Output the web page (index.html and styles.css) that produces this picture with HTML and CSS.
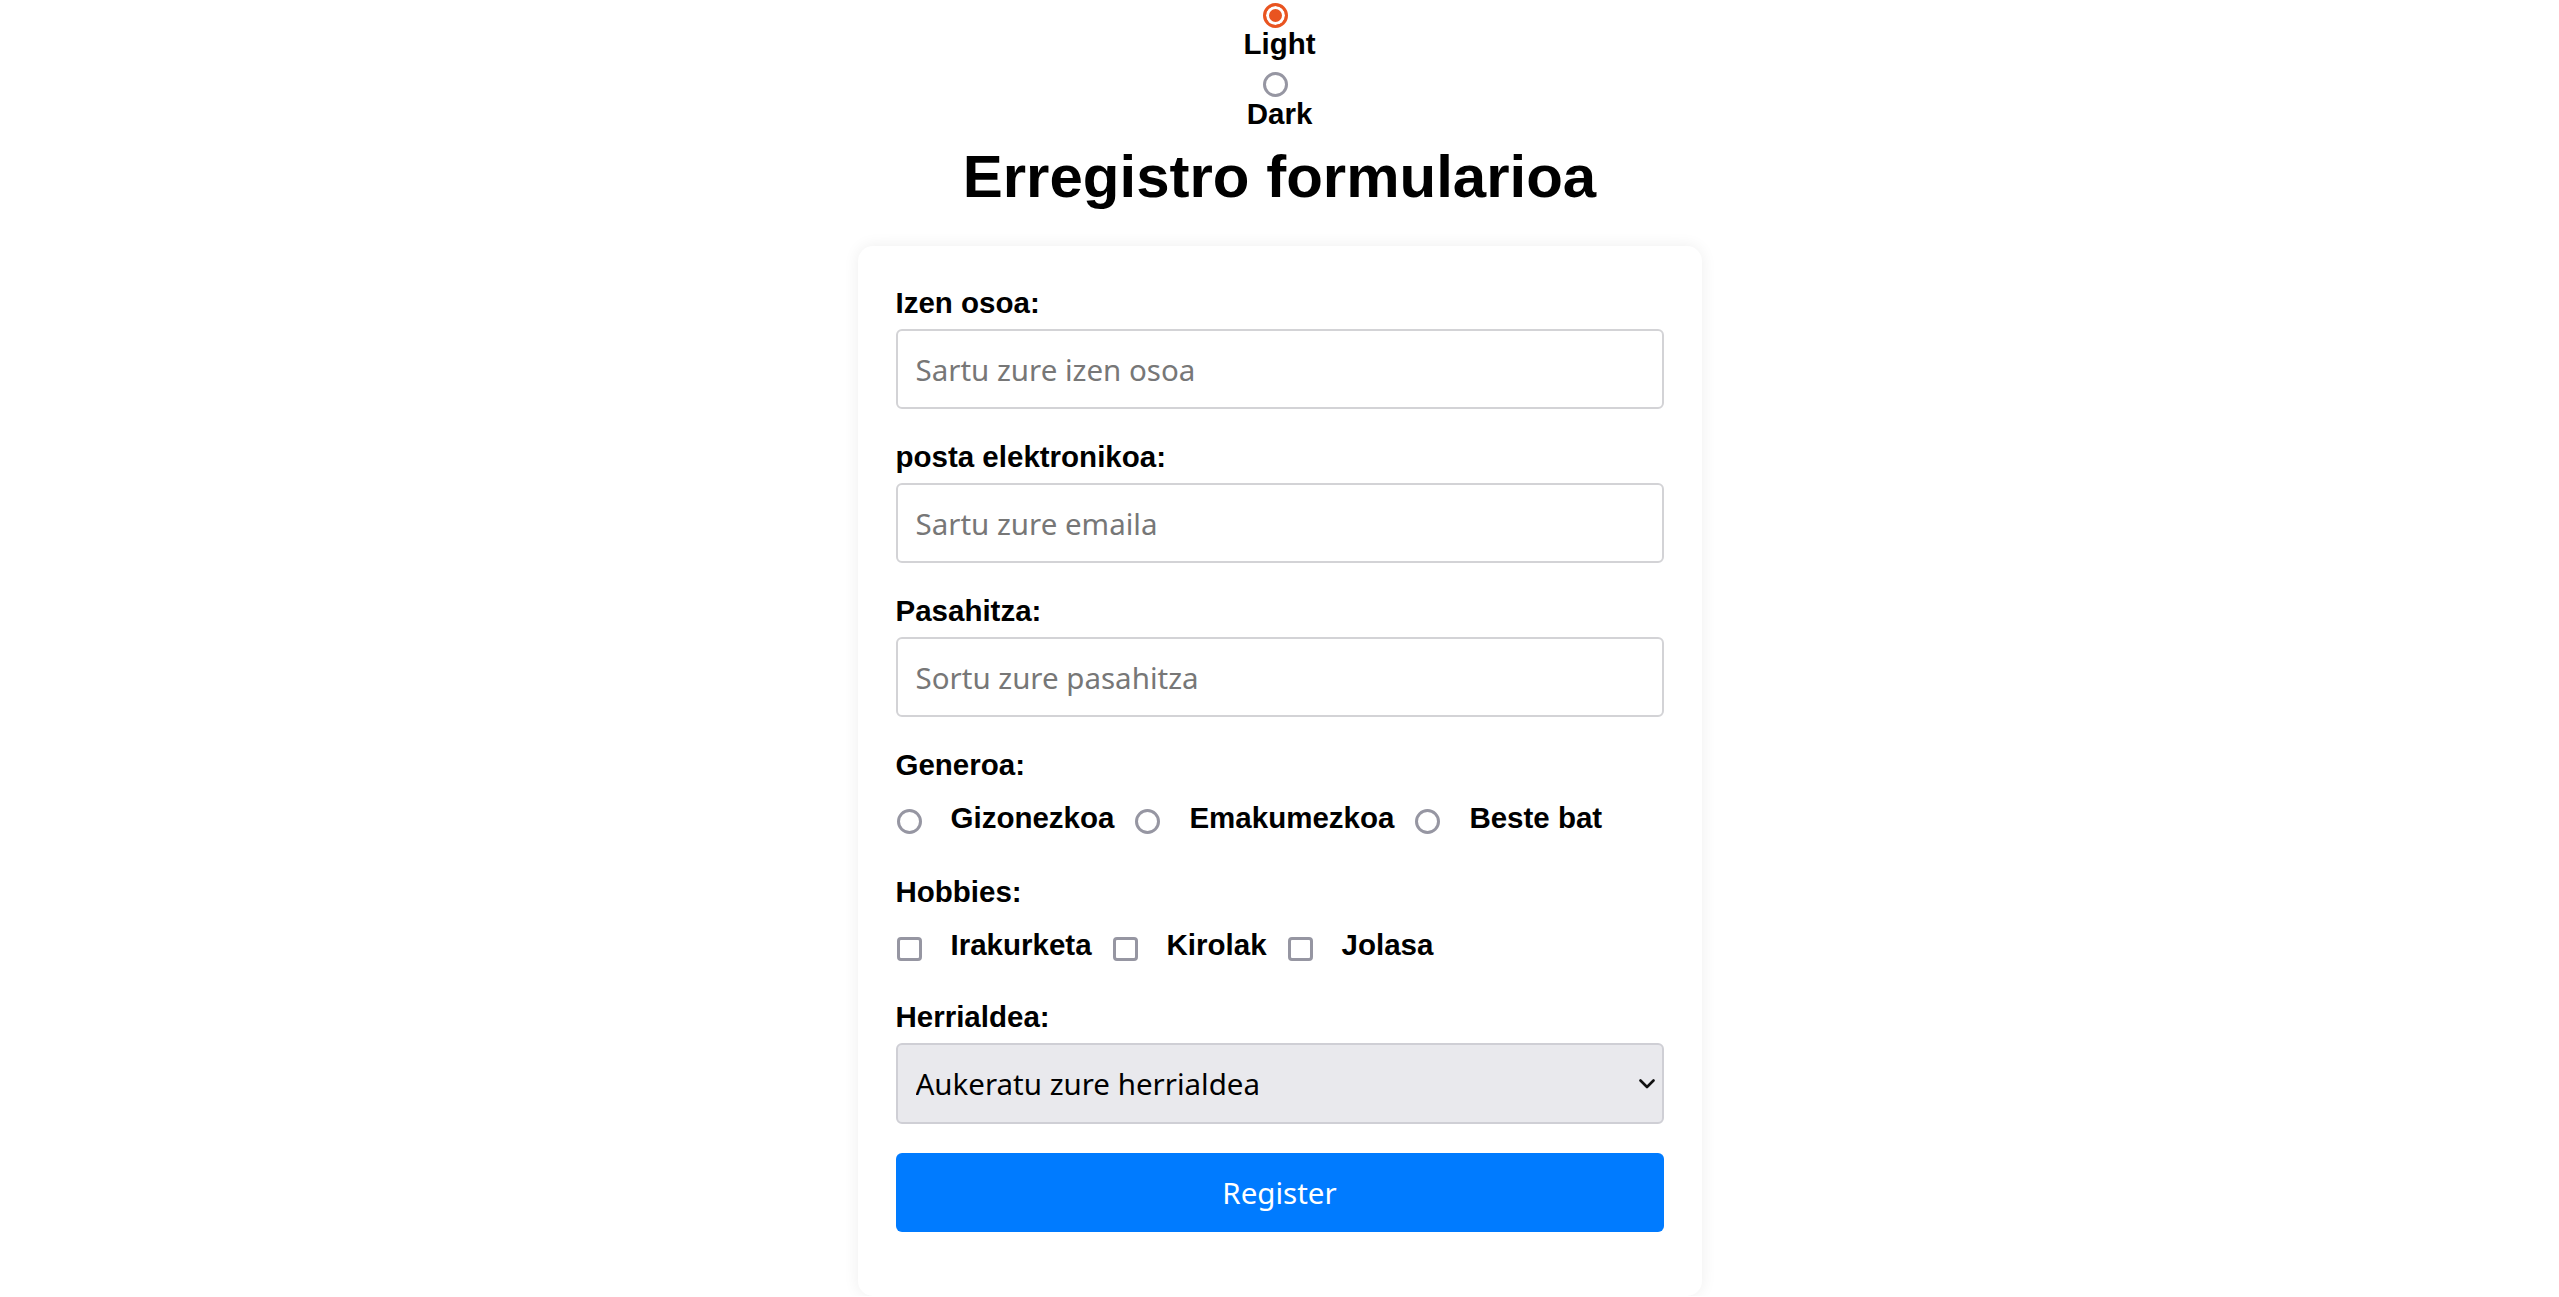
FILE: index.html
```html
<!DOCTYPE html>
<html lang="eu">
<head>
<meta charset="utf-8">
<title>Erregistro formularioa</title>
<link rel="stylesheet" href="styles.css">
</head>
<body>
<div class="theme">
  <input type="radio" name="theme" id="light" class="theme-radio theme-radio-light" checked>
  <label for="light" class="theme-label theme-label-light">Light</label>
  <input type="radio" name="theme" id="dark" class="theme-radio theme-radio-dark">
  <label for="dark" class="theme-label">Dark</label>
</div>
<h1 class="title">Erregistro formularioa</h1>
<form class="card">
  <label class="field-label" for="name">Izen osoa:</label>
  <input class="text-input" id="name" type="text" placeholder="Sartu zure izen osoa">

  <label class="field-label" for="email">posta elektronikoa:</label>
  <input class="text-input" id="email" type="email" placeholder="Sartu zure emaila">

  <label class="field-label" for="pass">Pasahitza:</label>
  <input class="text-input" id="pass" type="password" placeholder="Sortu zure pasahitza">

  <div class="field-label">Generoa:</div>
  <div class="options options-gender">
    <input type="radio" class="opt-radio" name="gender" id="g1"><label for="g1" class="opt-label">Gizonezkoa</label>
    <input type="radio" class="opt-radio" name="gender" id="g2"><label for="g2" class="opt-label">Emakumezkoa</label>
    <input type="radio" class="opt-radio" name="gender" id="g3"><label for="g3" class="opt-label">Beste bat</label>
  </div>

  <div class="field-label">Hobbies:</div>
  <div class="options options-hobbies">
    <input type="checkbox" class="opt-check" id="h1"><label for="h1" class="opt-label">Irakurketa</label>
    <input type="checkbox" class="opt-check" id="h2"><label for="h2" class="opt-label">Kirolak</label>
    <input type="checkbox" class="opt-check" id="h3"><label for="h3" class="opt-label">Jolasa</label>
  </div>

  <label class="field-label" for="country">Herrialdea:</label>
  <div class="select-wrap">
    <select class="select" id="country">
      <option>Aukeratu zure herrialdea</option>
      <option>Euskal Herria</option>
      <option>Espainia</option>
      <option>Frantzia</option>
    </select>
    <svg class="chevron" width="16" height="10" viewBox="0 0 16 10"><path d="M1.5 1.5 L8 8 L14.5 1.5" fill="none" stroke="#111" stroke-width="2.6" stroke-linecap="round" stroke-linejoin="round"/></svg>
  </div>

  <button type="submit" class="submit">Register</button>
</form>
</body>
</html>
```

FILE: styles.css
```css
html, body {
  margin: 0;
  padding: 0;
  background: #ffffff;
}

body {
  font-family: "Liberation Sans", Arial, sans-serif;
  font-weight: bold;
  color: #000000;
}

/* theme switch */
.theme {
  display: flex;
  flex-direction: column;
  align-items: center;
}

.theme-radio {
  appearance: none;
  -webkit-appearance: none;
  box-sizing: border-box;
  width: 25px;
  height: 25px;
  margin: 0 0 0 -9px;
  border-radius: 50%;
  border: 3px solid #9696a2;
  background: #ffffff;
}

.theme-radio-light {
  margin-top: 3px;
}

.theme-radio-dark {
  margin-top: 11px;
}

.theme-radio:checked {
  border: 3.5px solid #e95420;
  background: #e95420;
  box-shadow: inset 0 0 0 3px #ffffff;
}

.theme-label {
  font-size: 29.5px;
  line-height: 34px;
}

.theme-label-light {
  margin-top: -1px;
}

.title {
  margin: 11px 0 35px;
  text-align: center;
  font-size: 60px;
  line-height: 69px;
  font-weight: bold;
}

/* card */
.card {
  box-sizing: border-box;
  width: 844px;
  margin: 0 auto;
  padding: 40px 38px 64px;
  background: #ffffff;
  border-radius: 15px;
  box-shadow: 0 0 16px rgba(0, 0, 0, 0.07);
}

.field-label {
  display: block;
  font-size: 29.5px;
  line-height: 34px;
  margin-bottom: 9px;
}

.text-input {
  display: block;
  box-sizing: border-box;
  width: 100%;
  height: 80px;
  margin: 0 0 31px;
  padding: 0 18px;
  border: 2px solid #d3d3d6;
  border-radius: 6px;
  background: #ffffff;
  font-family: "Noto Sans", "Open Sans", sans-serif;
  font-size: 29.5px;
  font-weight: normal;
  color: #000000;
  outline: none;
}

.text-input::placeholder {
  color: #777777;
  opacity: 1;
}

/* option rows */
.options {
  display: flex;
  align-items: flex-start;
  height: 34px;
  font-size: 29.5px;
  line-height: 34px;
}

.options-gender {
  margin: 19px 0 40px;
}

.options-hobbies {
  margin: 19px 0 38px;
}

.opt-radio,
.opt-check {
  appearance: none;
  -webkit-appearance: none;
  box-sizing: border-box;
  flex: none;
  width: 25px;
  height: 25px;
  margin: 0 29px 0 1px;
  border: 3px solid #9696a2;
  background: #ffffff;
}

.opt-radio {
  margin-top: 8px;
  border-radius: 50%;
}

.opt-check {
  margin-top: 9px;
  height: 24px;
  border-radius: 4px;
}

.opt-label {
  margin-right: 20px;
  white-space: nowrap;
}

/* select */
.select-wrap {
  position: relative;
  margin-bottom: 29px;
}

.select {
  appearance: none;
  -webkit-appearance: none;
  display: block;
  box-sizing: border-box;
  width: 100%;
  height: 81px;
  margin: 0;
  padding: 0 18px;
  border: 2px solid #cfcfd5;
  border-radius: 6px;
  background: #e9e9ed;
  font-family: "Noto Sans", "Open Sans", sans-serif;
  font-size: 29.5px;
  font-weight: normal;
  color: #000000;
  outline: none;
}

.chevron {
  position: absolute;
  right: 9px;
  top: 36px;
  pointer-events: none;
}

/* button */
.submit {
  display: block;
  width: 100%;
  height: 79px;
  margin: 0;
  border: none;
  border-radius: 6px;
  background: #007bff;
  color: #ffffff;
  font-family: "Noto Sans", "Open Sans", sans-serif;
  font-size: 29.5px;
  font-weight: normal;
  cursor: pointer;
}
```
